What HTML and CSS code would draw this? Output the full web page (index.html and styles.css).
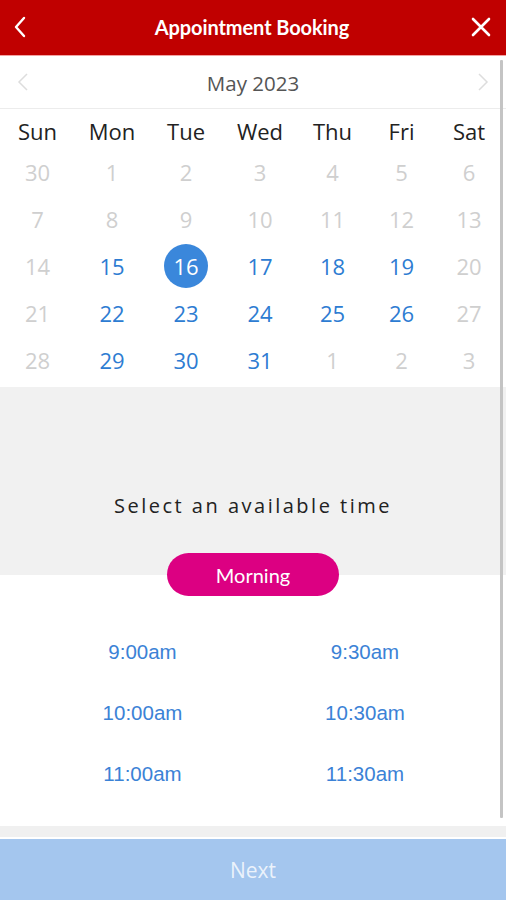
FILE: index.html
```html
<!DOCTYPE html>
<html>
<head>
<meta charset="utf-8">
<link rel="stylesheet" href="styles.css">
</head>
<body>
<div class="app">
  <header class="topbar">
    <svg class="icon-back" width="14" height="22" viewBox="0 0 14 22"><path d="M11 2 L3 11 L11 20" fill="none" stroke="#fff" stroke-width="2.4" stroke-linecap="round" stroke-linejoin="round"/></svg>
    <h1 class="title">Appointment Booking</h1>
    <svg class="icon-close" width="20" height="20" viewBox="0 0 20 20"><path d="M2 2 L18 18 M18 2 L2 18" fill="none" stroke="#fff" stroke-width="2.6" stroke-linecap="round"/></svg>
  </header>
  <div class="scroll">
    <div class="monthbar">
      <svg class="chev" width="12" height="20" viewBox="0 0 12 20"><path d="M10 2 L2 10 L10 18" fill="none" stroke="#ddd" stroke-width="1.5"/></svg>
      <span class="month">May 2023</span>
      <svg class="chev" width="12" height="20" viewBox="0 0 12 20"><path d="M2 2 L10 10 L2 18" fill="none" stroke="#ddd" stroke-width="1.5"/></svg>
    </div>
    <div class="grid dow">
      <span>Sun</span><span>Mon</span><span>Tue</span><span>Wed</span><span>Thu</span><span>Fri</span><span>Sat</span>
    </div>
    <div class="grid days">
      <span class="off">30</span><span class="off">1</span><span class="off">2</span><span class="off">3</span><span class="off">4</span><span class="off">5</span><span class="off">6</span>
      <span class="off">7</span><span class="off">8</span><span class="off">9</span><span class="off">10</span><span class="off">11</span><span class="off">12</span><span class="off">13</span>
      <span class="off">14</span><span class="on">15</span><span class="sel"><b>16</b></span><span class="on">17</span><span class="on">18</span><span class="on">19</span><span class="off">20</span>
      <span class="off">21</span><span class="on">22</span><span class="on">23</span><span class="on">24</span><span class="on">25</span><span class="on">26</span><span class="off">27</span>
      <span class="off">28</span><span class="on">29</span><span class="on">30</span><span class="on">31</span><span class="off">1</span><span class="off">2</span><span class="off">3</span>
    </div>
    <section class="timehead">
      <p class="prompt">Select an available time</p>
    </section>
    <div class="pillrow"><span class="pill">Morning</span></div>
    <div class="slots">
      <span>9:00am</span><span>9:30am</span>
      <span>10:00am</span><span>10:30am</span>
      <span>11:00am</span><span>11:30am</span>
    </div>
    <div class="scrollbar"></div>
  </div>
  <div class="gap"></div>
  <footer class="next">Next</footer>
</div>
</body>
</html>
```
FILE: styles.css
```css
* { box-sizing: border-box; }
html, body { margin: 0; padding: 0; }
body { width: 506px; height: 900px; overflow: hidden; background: #fff; font-family: "Open Sans", "Noto Sans", sans-serif; }
.app { display: flex; flex-direction: column; height: 900px; }
.topbar {
  height: 56px; background: #c00000; border-bottom: 1px solid #f3a2a2;
  display: flex; align-items: center; justify-content: space-between;
  padding: 0 15px 1px 12px;
}
.title { margin: 0; color: #fff; font-family: "Lato", "Open Sans", sans-serif; font-weight: 700; font-size: 20px; letter-spacing: -0.1px; margin-left: 6px; }
.icon-back { margin-left: 1px; }
.scroll { position: relative; flex: 1; }
.scrollbar { position: absolute; right: 3px; top: 4px; width: 3px; height: 758px; background: #c4c4c4; border-radius: 1px; }
.monthbar {
  height: 53px; display: flex; align-items: center; justify-content: space-between;
  padding: 0 17px 0 17px; border-bottom: 1px solid #ececec;
}
.month { font-size: 20.5px; color: #555; padding-top: 1px; }
.grid { display: grid; grid-template-columns: 75px 74px 74px 74px 71px 67px 68px; text-align: center; width: 503px; }
.dow { height: 47px; align-items: center; font-size: 22px; color: #222; padding-bottom: 3px; }
.days { grid-auto-rows: 47px; align-items: center; font-size: 22px; margin-top: -8px; height: 242px; align-content: start; }
.days span { display: flex; align-items: center; justify-content: center; height: 47px; }
.off { color: #cfcfcf; }
.on { color: #2d7cd2; }
.sel b { font-weight: 400; width: 44px; height: 44px; border-radius: 50%; background: #3a87db; color: #fff; display: flex; align-items: center; justify-content: center; }
.timehead { background: #f1f1f1; height: 188px; display: flex; align-items: flex-end; justify-content: center; padding-bottom: 56px; margin-top: -3px; }
.prompt { margin: 0; font-size: 20px; letter-spacing: 2.5px; color: #222; }
.pillrow { display: flex; justify-content: center; margin-top: -22px; }
.pill { width: 172px; height: 43px; border-radius: 22px; background: #dc0082; color: #fff; font-family: "Lato", sans-serif; font-size: 20px; display: flex; align-items: center; justify-content: center; }
.slots { display: grid; grid-template-columns: 285px 160px; grid-auto-rows: 61px; padding-top: 44px; font-family: "Liberation Sans", Arial, sans-serif; font-size: 20.5px; color: #3b82d6; text-align: center; }
.gap { height: 13px; background: #f0f0f0; border-bottom: 2px solid #fff; }
.next { height: 61px; background: #a4c6ee; color: rgba(255,255,255,0.8); font-size: 21px; display: flex; align-items: center; justify-content: center; }
```
